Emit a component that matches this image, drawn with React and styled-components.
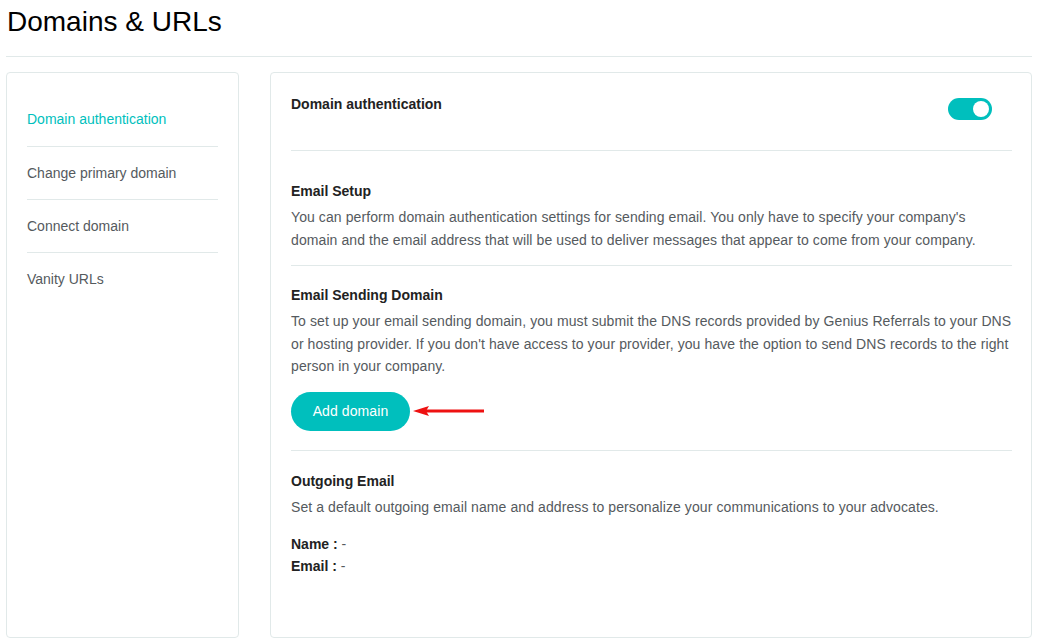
import React from "react";
import styled, { createGlobalStyle } from "styled-components";

const colors = {
  teal: "#00bfbd",
  line: "#e1e9e9",
  text: "#555a5e",
  dark: "#222",
};

const GlobalStyle = createGlobalStyle`
  * { box-sizing: border-box; }
  body {
    margin: 0;
    background: #fff;
    font-family: "Liberation Sans", Arial, sans-serif;
    color: ${colors.text};
  }
`;

const Page = styled.div`
  width: 1037px;
  padding: 0 5px 0 6px;
`;

const Title = styled.h1`
  margin: 0;
  padding: 5px 0 0 1px;
  height: 57px;
  font-size: 28px;
  font-weight: normal;
  line-height: 34px;
  color: #000;
  border-bottom: 1px solid ${colors.line};
`;

const Columns = styled.div`
  display: grid;
  grid-template-columns: 233px 762px;
  gap: 31px;
  margin-top: 15px;
`;

const Card = styled.div`
  border: 1px solid ${colors.line};
  border-radius: 4px;
  height: 566px;
  background: #fff;
`;

const Nav = styled(Card)`
  padding: 20px 20px 0;
`;

const NavItem = styled.a`
  display: block;
  padding: ${(p) => (p.$first ? "16px 0 17px" : "16px 0")};
  font-size: 14px;
  line-height: 20px;
  color: ${(p) => (p.$active ? colors.teal : colors.text)};
  border-bottom: ${(p) => (p.$last ? "none" : `1px solid ${colors.line}`)};
  cursor: pointer;
`;

const Panel = styled(Card)`
  padding: 0 19px 0 20px;
`;

const Section = styled.div`
  padding: ${(p) => p.$pad || "20px 0"};
  border-bottom: ${(p) => (p.$last ? "none" : `1px solid ${colors.line}`)};
`;

const HeaderRow = styled.div`
  display: flex;
  justify-content: space-between;
  align-items: flex-start;
`;

const Heading = styled.div`
  font-size: 14px;
  font-weight: bold;
  line-height: 20px;
  color: ${colors.dark};
`;

const Text = styled.p`
  margin: 5px 0 0;
  font-size: 14px;
  line-height: 22.5px;
  letter-spacing: 0.09px;
  color: ${colors.text};
`;

const Toggle = styled.div`
  width: 44px;
  height: 22px;
  margin: 4px 20px 0 0;
  border-radius: 11px;
  background: ${colors.teal};
  position: relative;

  &::after {
    content: "";
    position: absolute;
    top: 3px;
    right: 3px;
    width: 16px;
    height: 16px;
    border-radius: 50%;
    background: #fff;
  }
`;

const ButtonRow = styled.div`
  display: flex;
  align-items: center;
  gap: 3px;
  margin-top: 14px;
`;

const Button = styled.button`
  width: 119px;
  height: 39px;
  border: none;
  border-radius: 20px;
  background: ${colors.teal};
  color: #fff;
  font-family: inherit;
  font-size: 14px;
  letter-spacing: 0.1px;
  cursor: pointer;
`;

const Field = styled.div`
  font-size: 14px;
  line-height: 22px;
  color: ${colors.text};

  b {
    color: ${colors.dark};
  }
`;

const Fields = styled.div`
  margin-top: 15px;
`;

const Arrow = () => (
  <svg width="72" height="12" viewBox="0 0 72 12">
    <line x1="12" y1="6" x2="71" y2="6" stroke="#ee1111" strokeWidth="3" />
    <path d="M0 6 L16 1 L13 6 L16 11 Z" fill="#ee1111" />
  </svg>
);

const navItems = [
  "Domain authentication",
  "Change primary domain",
  "Connect domain",
  "Vanity URLs",
];

export default function App() {
  return (
    <>
      <GlobalStyle />
      <Page>
        <Title>Domains &amp; URLs</Title>
        <Columns>
          <Nav>
            {navItems.map((item, i) => (
              <NavItem
                key={item}
                $active={i === 0}
                $first={i === 0}
                $last={i === navItems.length - 1}
              >
                {item}
              </NavItem>
            ))}
          </Nav>
          <Panel>
            <Section $pad="21px 0 30px">
              <HeaderRow>
                <Heading>Domain authentication</Heading>
                <Toggle />
              </HeaderRow>
            </Section>
            <Section $pad="30px 0 14px">
              <Heading>Email Setup</Heading>
              <Text>
                You can perform domain authentication settings for sending email. You only have to
                specify your company's domain and the email address that will be used to deliver
                messages that appear to come from your company.
              </Text>
            </Section>
            <Section $pad="19px 0 19px">
              <Heading>Email Sending Domain</Heading>
              <Text>
                To set up your email sending domain, you must submit the DNS records provided by
                Genius Referrals to your DNS or hosting provider. If you don't have access to your
                provider, you have the option to send DNS records to the right person in your
                company.
              </Text>
              <ButtonRow>
                <Button>Add domain</Button>
                <Arrow />
              </ButtonRow>
            </Section>
            <Section $pad="20px 0" $last>
              <Heading>Outgoing Email</Heading>
              <Text>
                Set a default outgoing email name and address to personalize your communications
                to your advocates.
              </Text>
              <Fields>
                <Field>
                  <b>Name :</b> -
                </Field>
                <Field>
                  <b>Email :</b> -
                </Field>
              </Fields>
            </Section>
          </Panel>
        </Columns>
      </Page>
    </>
  );
}
